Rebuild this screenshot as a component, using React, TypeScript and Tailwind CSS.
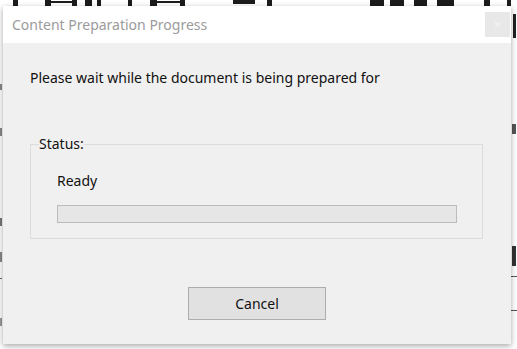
import React from "react";

function Backdrop() {
  const top: [number, number][] = [
    [13, 5], [45, 6], [72, 5], [85, 7], [97, 4], [128, 4], [150, 7], [180, 5],
    [267, 5], [370, 14], [390, 14], [414, 13], [437, 17], [484, 6], [507, 4],
  ];
  return (
    <>
      <div className="absolute left-0 top-0 w-[517px] h-[6px] overflow-hidden">
        <svg width="517" height="6" viewBox="0 0 517 6">
          {top.map(([x, w], i) => (
            <rect key={i} x={x} y={0} width={w} height={6} fill="#1c1c1c" />
          ))}
          <rect x={45} y={1} width={30} height={2} fill="#1c1c1c" />
          <rect x={150} y={1} width={35} height={2} fill="#1c1c1c" />
          <rect x={233} y={0} width={22} height={4} fill="#1c1c1c" />
        </svg>
      </div>
      <div className="absolute right-0 top-0 w-[6px] h-[349px] overflow-hidden">
        <svg width="6" height="349" viewBox="511 0 6 349">
          <rect x={513} y={14} width={3} height={24} fill="#222" />
          <rect x={512} y={124} width={4} height={10} fill="#555" />
          <rect x={512} y={246} width={4} height={20} fill="#333" />
          <rect x={511} y={276} width={6} height={1} fill="#555" />
          <rect x={511} y={310} width={6} height={1} fill="#555" />
        </svg>
      </div>
      <div className="absolute left-0 top-0 w-[3px] h-[349px] overflow-hidden">
        <svg width="3" height="349" viewBox="0 0 3 349">
          <rect x={0} y={84} width={2} height={6} fill="#888" />
          <rect x={0} y={128} width={2} height={8} fill="#888" />
          <rect x={0} y={218} width={2} height={8} fill="#777" />
          <rect x={0} y={252} width={2} height={10} fill="#888" />
          <rect x={0} y={278} width={2} height={1} fill="#666" />
          <rect x={0} y={318} width={2} height={8} fill="#999" />
        </svg>
      </div>
    </>
  );
}

export default function App() {
  return (
    <div
      className="relative w-[517px] h-[349px] overflow-hidden bg-white"
      style={{ fontFamily: '"Noto Sans", "Open Sans", sans-serif' }}
    >
      <Backdrop />
      <div className="absolute z-10 left-[3px] top-[6px] w-[508px] h-[338px] flex flex-col bg-[#f0f0f0] shadow-[0_2px_6px_rgba(0,0,0,0.35)]">
        <div className="h-[37px] bg-white flex items-center justify-between pl-[9px] pr-[1px]">
          <span className="text-[14px] text-[#9b9b9b]">Content Preparation Progress</span>
          <div className="w-[25px] h-[25px] bg-[#e8e8e8] flex items-center justify-center text-[13px] leading-none text-[#f4f4f4]">
            ×
          </div>
        </div>
        <div className="flex flex-col flex-1 pl-[27px] pr-[28px]">
          <p className="mt-[25px] text-[14px] leading-[20px] text-[#111]">
            Please wait while the document is being prepared for
          </p>
          <fieldset className="mt-[46px] w-[453px] border border-[#dcdcdc] pl-[26px] pb-[15px]">
            <legend className="-ml-[18px] text-[14px] leading-[20px] text-[#111]">Status:</legend>
            <div className="mt-[17px] text-[14px] leading-[20px] text-[#111]">Ready</div>
            <div className="mt-[14px] w-[400px] h-[18px] border border-[#bcbcbc] bg-[#e6e6e6]" />
          </fieldset>
          <button className="mt-[48px] ml-[158px] w-[138px] h-[33px] border border-[#adadad] bg-[#e1e1e1] text-[14px] text-[#111]">
            Cancel
          </button>
        </div>
      </div>
    </div>
  );
}
